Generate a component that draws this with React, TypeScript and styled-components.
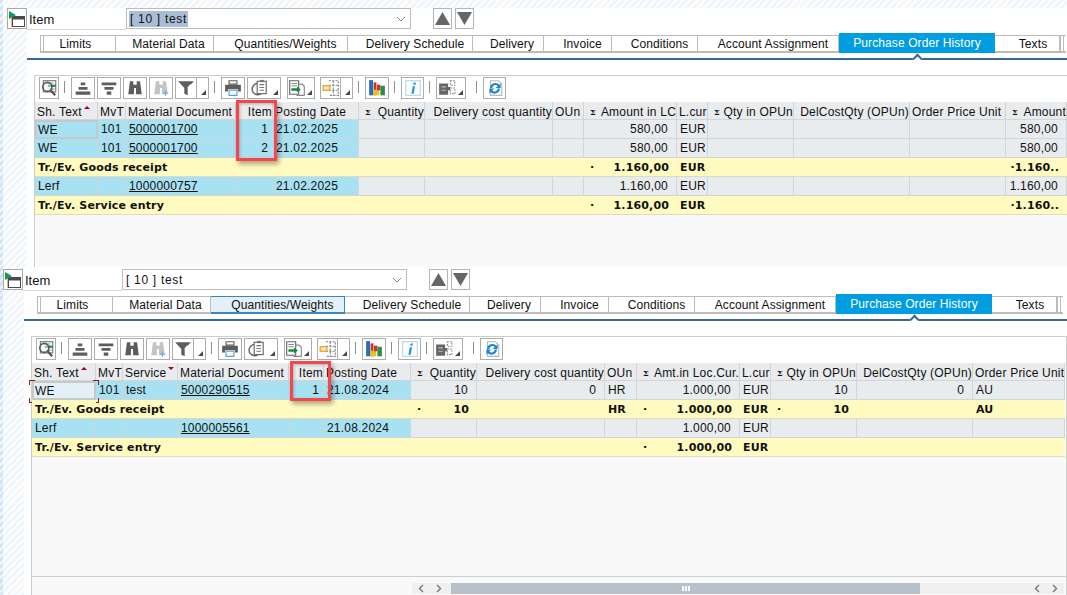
import React from "react";
import styled, { createGlobalStyle } from "styled-components";

const GlobalStyle = createGlobalStyle`
  html, body {
    margin: 0;
    padding: 0;
    background: #fff;
  }
  body {
    font-family: "Liberation Sans", Arial, sans-serif;
    font-size: 12px;
    color: #111;
  }
`;

const hatch =
  "repeating-linear-gradient(135deg, #eff4f9 0 2px, #fbfcfe 2px 5px)";
const strongHatch =
  "repeating-linear-gradient(135deg, #d3e5f3 0 3px, #f2f7fb 3px 5px)";

const Page = styled.div`
  width: 1067px;
  height: 595px;
  overflow: hidden;
  display: flex;
  flex-direction: column;
  background: ${strongHatch} 0 0 / 3px 100% no-repeat, ${hatch};
`;

const Pane = styled.section<{ $h: number; $top: number }>`
  height: ${(p) => p.$h}px;
  padding-top: ${(p) => p.$top}px;
  box-sizing: border-box;
  display: flex;
  flex-direction: column;
  flex-shrink: 0;
  min-width: 0;
`;

const HeadRow = styled.div<{ $left: number; $lead: number }>`
  display: flex;
  height: ${(p) => 22 + p.$lead}px;
  padding-left: ${(p) => p.$left}px;
  flex-shrink: 0;
`;

const HeadIcon = styled.button<{ $lead: number }>`
  width: 20px;
  height: 21px;
  margin-top: ${(p) => p.$lead}px;
  padding: 0;
  box-sizing: border-box;
  border: 1px solid #a9a9a9;
  background: #fff;
  display: flex;
  align-items: center;
  justify-content: center;
`;

const HeadFields = styled.div<{ $lead: number }>`
  flex: 1;
  padding-top: ${(p) => p.$lead}px;
  background: #fff;
  display: flex;
  align-items: flex-start;
`;

const ItemLabel = styled.label`
  width: 97px;
  height: 21px;
  padding-left: 2px;
  line-height: 23px;
  box-sizing: content-box;
  border-bottom: 1px solid #d4d4d4;
  font-size: 13px;
`;

const Combo = styled.div`
  width: 285px;
  height: 21px;
  box-sizing: border-box;
  border: 1px solid #bdbdbd;
  background: #fff;
  display: flex;
  align-items: center;
  justify-content: space-between;
  padding: 1px 4px 0 2px;
  letter-spacing: 0.7px;
`;

const ComboText = styled.span<{ $selected?: boolean }>`
  padding: 1px 1px;
  background: ${(p) => (p.$selected ? "#a9bdd6" : "transparent")};
`;

const Stepper = styled.div`
  display: flex;
  gap: 3px;
  margin-left: 22px;
`;

const StepButton = styled.button`
  width: 19px;
  height: 21px;
  padding: 0;
  box-sizing: border-box;
  border: 1px solid #b5b5b5;
  background: #fff;
  display: flex;
  align-items: center;
  justify-content: center;
`;

const Sheet = styled.div<{ $left: number }>`
  flex: 1;
  min-height: 0;
  margin-left: ${(p) => p.$left}px;
  padding-top: 3px;
  background: #fff;
  display: flex;
  flex-direction: column;
`;

const TabStrip = styled.div`
  display: flex;
  align-items: flex-start;
  height: 20px;
  margin-left: 13px;
  flex-shrink: 0;
`;

const TabStack = styled.div`
  width: 6px;
  height: 18px;
  margin-top: 2px;
  box-sizing: border-box;
  border-top: 1px solid #bcbcbc;
  border-bottom: 2px solid #bcbcbc;
  background: repeating-linear-gradient(90deg, #bcbcbc 0 1px, #fff 1px 3px);
  flex-shrink: 0;
`;

const Tab = styled.div<{
  $w: number;
  $shift: number;
  $state?: "active" | "hover";
}>`
  width: ${(p) => p.$w}px;
  box-sizing: border-box;
  flex-shrink: 0;
  text-align: center;
  letter-spacing: 0.1px;
  white-space: nowrap;
  padding-left: ${(p) => Math.max(p.$shift, 0) * 2}px;
  padding-right: ${(p) => Math.max(-p.$shift, 0) * 2}px;
  margin-top: ${(p) => (p.$state === "active" ? 0 : 2)}px;
  height: ${(p) => (p.$state === "active" ? 20 : 18)}px;
  line-height: ${(p) => (p.$state === "active" ? 21 : 16)}px;
  background: ${(p) =>
    p.$state === "active"
      ? "#009de0"
      : p.$state === "hover"
      ? "#e3f0f8"
      : "#fff"};
  color: ${(p) => (p.$state === "active" ? "#fff" : "#111")};
  border-style: solid;
  border-color: ${(p) => (p.$state === "hover" ? "#3c86bb" : "#bcbcbc")};
  border-width: ${(p) => (p.$state === "active" ? "0" : "1px 1px 2px 0")};
`;

const Rule = styled.div`
  position: relative;
  height: 2px;
  margin-top: 5px;
  background: #36699a;
  flex-shrink: 0;
`;

const RuleNotch = styled.span<{ $x: number }>`
  position: absolute;
  left: ${(p) => p.$x}px;
  top: -3px;
  width: 5px;
  height: 5px;
  background: #fff;
  border-top: 2px solid #36699a;
  border-left: 2px solid #36699a;
  transform: rotate(45deg);
`;

const Frame = styled.div<{ $closed?: boolean }>`
  flex: 1;
  min-height: 0;
  margin: 15px 0 0 7px;
  border-top: 1px solid #cdcdcd;
  border-left: 1px solid #cdcdcd;
  border-right: ${(p) => (p.$closed ? "1px solid #cdcdcd" : "0")};
  background: #f9f9f9;
  display: flex;
  flex-direction: column;
`;

const Toolbar = styled.div`
  height: 26px;
  box-sizing: border-box;
  padding: 1px 0 0 4px;
  background: #fff;
  display: flex;
  align-items: flex-start;
  gap: 2px;
  flex-shrink: 0;
`;

const ToolButton = styled.button<{ $w: number; $menu?: boolean; $space?: number }>`
  position: relative;
  width: ${(p) => p.$w}px;
  height: 22px;
  padding: 0 ${(p) => (p.$menu ? 8 : 0)}px 0 0;
  margin-left: ${(p) => p.$space ?? 0}px;
  box-sizing: border-box;
  border: 1px solid #adadad;
  background: #fff;
  display: flex;
  align-items: center;
  justify-content: center;
  flex-shrink: 0;
  &::after {
    content: "";
    display: ${(p) => (p.$menu ? "block" : "none")};
    position: absolute;
    right: 2px;
    bottom: 3px;
    width: 0;
    height: 0;
    border-left: 5px solid transparent;
    border-bottom: 5px solid #4a4a4a;
  }
`;

const SplitTail = styled(ToolButton)`
  margin-left: -2px;
  border-left: 0;
  padding: 0;
`;

const ToolSep = styled.span<{ $extra?: number }>`
  width: 1px;
  height: 12px;
  margin: 4px 4px 0 ${(p) => 3 + (p.$extra ?? 0)}px;
  background: #8f8f8f;
  flex-shrink: 0;
`;

const Table = styled.div`
  position: relative;
  flex-shrink: 0;
`;

const Row = styled.div<{ $cols: number[]; $h: number }>`
  display: grid;
  grid-template-columns: ${(p) => p.$cols.map((c) => `${c}px`).join(" ")};
  height: ${(p) => p.$h}px;
`;

const HeadCell = styled.div<{ $right?: boolean; $sum?: boolean }>`
  display: flex;
  align-items: center;
  justify-content: ${(p) =>
    p.$sum ? "space-between" : p.$right ? "flex-end" : "flex-start"};
  box-sizing: border-box;
  padding: 2px 0 0 ${(p) => (p.$sum ? 6 : 2)}px;
  background: #e9ebed;
  border-right: 1px solid #d2d4d6;
  border-bottom: 1px solid #d2d4d6;
  white-space: nowrap;
  overflow: hidden;
  letter-spacing: 0.2px;
`;

const SumMark = styled.span`
  font-size: 8px;
  font-weight: 700;
  font-family: "DejaVu Serif", serif;
`;

const SortMark = styled.span`
  width: 0;
  height: 0;
  margin: 0 0 9px 2px;
  border-left: 3px solid transparent;
  border-right: 3px solid transparent;
  border-bottom: 3px solid #a5002d;
`;

const SortDown = styled(SortMark)`
  border-bottom: 0;
  border-top: 3px solid #a5002d;
`;

const Cell = styled.div<{
  $tone: "blue" | "grey" | "total";
  $right?: boolean;
  $pad?: number;
  $framed?: boolean;
  $focus?: boolean;
}>`
  position: relative;
  display: flex;
  align-items: center;
  justify-content: ${(p) => (p.$right ? "flex-end" : "flex-start")};
  box-sizing: border-box;
  padding: ${(p) =>
    p.$right ? `0 ${p.$pad ?? 8}px 0 2px` : `0 1px 0 ${p.$framed ? 1 : 3}px`};
  white-space: nowrap;
  letter-spacing: 0.2px;
  background: ${(p) =>
    p.$focus
      ? "#e4f0f8"
      : p.$tone === "blue"
      ? "#a8e2f2"
      : p.$tone === "grey"
      ? "#e9ecee"
      : "#fffbc0"};
  border-right: ${(p) => (p.$tone === "total" ? "0" : "1px solid #cfd6da")};
  border-bottom: 1px solid ${(p) => (p.$tone === "total" ? "#dcdcc4" : "#cfd6da")};
  ${(p) => (p.$framed ? "border: 2px solid #c4c9cc;" : "")}
  overflow: ${(p) => (p.$tone === "total" || p.$focus ? "visible" : "hidden")};
  z-index: ${(p) => (p.$focus ? 1 : 0)};
  ${(p) =>
    p.$tone === "total"
      ? `font: 700 11px "DejaVu Sans", sans-serif; letter-spacing: 0.15px;
         &:first-child { z-index: 1; }`
      : ""}
`;

const TotalDot = styled.span`
  margin-right: auto;
  padding-left: 4px;
  font-weight: 700;
`;

const DocLink = styled.a`
  color: #111;
  text-decoration: underline;
`;

const FocusCorner = styled.span<{ $v: "top" | "bottom"; $h: "left" | "right" }>`
  position: absolute;
  ${(p) => p.$v}: ${(p) => (p.$v === "top" ? -3 : -5)}px;
  ${(p) => p.$h}: -5px;
  width: 5px;
  height: 4px;
  border-${(p) => p.$v}: 1px solid #8a1c1c;
  border-${(p) => p.$h}: 1px solid #8a1c1c;
`;

const Marker = styled.div<{ $l: number; $w: number; $h: number }>`
  position: absolute;
  left: ${(p) => p.$l}px;
  top: -2px;
  width: ${(p) => p.$w}px;
  height: ${(p) => p.$h}px;
  box-sizing: border-box;
  border: 3px solid #f4474d;
  box-shadow: 2px 3px 5px rgba(0, 0, 0, 0.35),
    inset 1px 1px 3px rgba(0, 0, 0, 0.25);
  pointer-events: none;
  z-index: 2;
`;

const ScrollBar = styled.div`
  margin-top: auto;
  height: 19px;
  box-sizing: border-box;
  border-top: 1px solid #cdcdcd;
  padding: 6px 2px 0 380px;
  display: flex;
  align-items: flex-start;
  flex-shrink: 0;
`;

const ScrollStep = styled.span`
  width: 18px;
  height: 11px;
  background: #f0f0f0;
  display: flex;
  align-items: center;
  justify-content: center;
  flex-shrink: 0;
`;

const ScrollTrack = styled.div`
  flex: 1;
  height: 11px;
  background: #f0f0f0;
  padding-left: 3px;
`;

const ScrollThumb = styled.div`
  width: 469px;
  height: 11px;
  background: #b6c1cc;
  display: flex;
  align-items: center;
  justify-content: center;
  gap: 1px;
`;

const Grip = styled.span`
  width: 2px;
  height: 5px;
  background: #fff;
`;

type Column = {
  label: string;
  w: number;
  right?: boolean;
  sum?: boolean;
  link?: boolean;
  pad?: number;
  sort?: "up" | "down";
  blue?: boolean;
};

type DataRow = {
  total?: boolean;
  values: string[];
  framed?: boolean;
  focus?: boolean;
};

const Line = (props: React.SVGProps<SVGSVGElement>) => (
  <svg width="18" height="18" viewBox="0 0 16 16" fill="none" {...props} />
);

const IconDetails = () => (
  <Line>
    <rect x="3" y="1.5" width="11" height="10" fill="#fff" stroke="#777" />
    <rect x="7" y="5" width="7" height="2" fill="#159447" />
    <path d="M6 3.5h6M8 9h5" stroke="#999" />
    <circle cx="6.5" cy="7" r="4" fill="#eef6ee" fillOpacity=".5" stroke="#555" strokeWidth="1.4" />
    <path d="M9.5 10l4 4.5" stroke="#555" strokeWidth="2" />
  </Line>
);
const IconSortUp = () => (
  <Line>
    <path d="M6 3h4v2.5H6zM4 7h8v2.5H4zM1.5 11h13v3h-13z" fill="#5d5d5d" />
  </Line>
);
const IconSortDown = () => (
  <Line>
    <path d="M1.5 3h13v2.5h-13zM4 7h8v2.5H4zM6 11h4v3H6z" fill="#5d5d5d" />
  </Line>
);
const IconBinoculars = ({ muted }: { muted?: boolean }) => (
  <Line>
    <path
      d="M3.5 2h3v3h3V2h3l1.5 11.5h-5L8.8 8H7.2l-.2 5.5H2z"
      fill={muted ? "#c4c4c4" : "#5d5d5d"}
    />
    {muted && <path d="M12 10v5M9.5 12.5h5" stroke="#6db3dd" />}
  </Line>
);
const IconFunnel = () => (
  <Line>
    <path d="M1 2h14L9.5 8v6.5l-3-1.5V8z" fill="#5d5d5d" />
    <path d="M9.5 8L12 5" stroke="#fff" />
  </Line>
);
const IconPrint = () => (
  <Line>
    <path d="M4.5 1.5h7v3h-7z" fill="#fff" stroke="#5d5d5d" />
    <path d="M1 5h14v6h-2.5V9h-9v2H1z" fill="#5d5d5d" />
    <path d="M4.5 10h7v4.5h-7z" fill="#fff" stroke="#5d9fd0" />
  </Line>
);
const IconExport = () => (
  <Line>
    <circle cx="6" cy="9" r="5" fill="#fff" stroke="#666" strokeWidth="1.3" />
    <rect x="5.5" y="2" width="8" height="11" fill="#fff" stroke="#666" />
    <path d="M7.5 5h4M7.5 7.5h4M7.5 10h4" stroke="#777" />
    <path d="M8 .8h3.5v2H8z" fill="#777" />
  </Line>
);
const IconTransfer = () => (
  <Line>
    <path d="M1.5 1.5h8v12h-8z" fill="#fff" stroke="#666" />
    <path d="M9.5 4.5h3l2 2v8h-7" stroke="#888" />
    <path d="M3 4h5M3 6h5" stroke="#888" />
    <path d="M3 8.2h5V6.7l3.4 2.6L8 12v-1.5H3z" fill="#128a3c" />
  </Line>
);
const IconLayout = () => (
  <Line>
    <path d="M6 1.5h8.5v13H6M10 1.5v13M6 5.5h8.5M6 10h8.5" stroke="#888" strokeDasharray="2 1" />
    <rect x="1" y="6" width="6" height="4" fill="#fde7b2" stroke="#e39c18" />
  </Line>
);
const IconChart = () => (
  <Line>
    <rect x="1" y="1" width="3.5" height="13.5" fill="#2a6db5" />
    <rect x="5" y="3" width="2.5" height="11.5" fill="#c8332c" />
    <rect x="5" y="9.5" width="5" height="5" fill="#e7c120" />
    <rect x="8" y="5" width="3" height="5" fill="#c8332c" />
    <rect x="11" y="6" width="4" height="8.5" fill="#2f8d46" />
  </Line>
);
const IconInfo = () => (
  <Line>
    <rect x="1.5" y="1.5" width="13" height="13" fill="#fff" stroke="#b7d6ec" />
    <path d="M8.6 3h2L10.2 5h-2zM7.8 6.5h2L8.6 13h-2z" fill="#1c97dc" />
  </Line>
);
const IconPuzzle = () => (
  <Line>
    <path d="M1 4h8v3h2v3H9v4H1z" fill="#666" />
    <path d="M11 1.5h4v4h-4zM11 8h4v5h-4z" fill="#fff" stroke="#888" strokeDasharray="1.5 1" />
    <path d="M3 7h4M3 10h4" stroke="#bbb" />
  </Line>
);
const IconRefresh = () => (
  <Line>
    <path d="M4 1.5h7l3 3v10H4z" fill="#fff" stroke="#b9b9b9" />
    <path d="M3.5 8a5 5 0 0 1 8.5-3l1-1.5V8H8.6L10.5 6.2A3 3 0 0 0 5.5 8z" fill="#1687cf" />
    <path d="M12.5 8.5a5 5 0 0 1-8.5 3l-1 1.5V8.5h4.4L5.5 10.3a3 3 0 0 0 5-1.8z" fill="#1687cf" />
  </Line>
);
const IconHead = () => (
  <svg width="18" height="18" viewBox="0 0 18 18" fill="none">
    <rect x="4.5" y="6.5" width="12" height="10" fill="#fff" stroke="#4a4a4a" />
    <path d="M4.5 7h12v2.5h-12z" fill="#4a4a4a" />
    <path d="M3.5 6v11" stroke="#f3b36b" />
    <path d="M1 1l7 4-7 4z" fill="#0d9a63" />
  </svg>
);
const IconStep = ({ up }: { up?: boolean }) => (
  <svg width="15" height="13" viewBox="0 0 15 13">
    <path d={up ? "M7.5 0L15 13H0z" : "M0 0h15L7.5 13z"} fill="#666" />
  </svg>
);
const Chevron = ({ left }: { left?: boolean }) => (
  <svg width="6" height="9" viewBox="0 0 6 9" fill="none">
    <path d={left ? "M5 1L1.5 4.5 5 8" : "M1 1l3.5 3.5L1 8"} stroke="#68788a" strokeWidth="1.4" />
  </svg>
);
const ComboArrow = () => (
  <svg width="10" height="6" viewBox="0 0 10 6" fill="none">
    <path d="M1 1l4 4 4-4" stroke="#8a8a8a" />
  </svg>
);

const Tools = () => (
  <Toolbar>
    <ToolButton $w={20}><IconDetails /></ToolButton>
    <ToolSep />
    <ToolButton $w={24}><IconSortUp /></ToolButton>
    <ToolButton $w={24}><IconSortDown /></ToolButton>
    <ToolButton $w={24}><IconBinoculars /></ToolButton>
    <ToolButton $w={24}><IconBinoculars muted /></ToolButton>
    <ToolButton $w={22}><IconFunnel /></ToolButton>
    <SplitTail $w={12} $menu />
    <ToolSep />
    <ToolButton $w={24}><IconPrint /></ToolButton>
    <ToolButton $w={34} $menu><IconExport /></ToolButton>
    <ToolButton $w={28} $menu $space={4}><IconTransfer /></ToolButton>
    <ToolButton $w={21} $space={3}><IconLayout /></ToolButton>
    <SplitTail $w={12} $menu />
    <ToolSep />
    <ToolButton $w={24}><IconChart /></ToolButton>
    <ToolSep />
    <ToolButton $w={23}><IconInfo /></ToolButton>
    <ToolSep />
    <ToolButton $w={30} $menu><IconPuzzle /></ToolButton>
    <ToolSep $extra={5} />
    <ToolButton $w={23}><IconRefresh /></ToolButton>
  </Toolbar>
);

const DataTable = ({
  columns,
  rows,
  marker,
}: {
  columns: Column[];
  rows: DataRow[];
  marker: { l: number; w: number; h: number };
}) => {
  const cols = columns.map((c) => c.w);
  return (
    <Table>
      <Row $cols={cols} $h={18}>
        {columns.map((c, i) => (
          <HeadCell key={i} $right={c.right} $sum={c.sum}>
            {c.sum && <SumMark>Σ</SumMark>}
            <span>{c.label}</span>
            {c.sort === "up" && <SortMark />}
            {c.sort === "down" && <SortDown />}
          </HeadCell>
        ))}
      </Row>
      {rows.map((r, ri) => (
        <Row key={ri} $cols={cols} $h={19}>
          {columns.map((c, i) => {
            const raw = r.values[i] ?? "";
            const dot = raw.startsWith("·");
            const text = dot ? raw.slice(1) : raw;
            const focus = i === 0 && r.focus;
            return (
              <Cell
                key={i}
                $tone={r.total ? "total" : c.blue ? "blue" : "grey"}
                $right={c.right}
                $pad={c.pad}
                $framed={i === 0 && r.framed}
                $focus={focus}
              >
                {dot && <TotalDot>·</TotalDot>}
                {c.link && text ? <DocLink>{text}</DocLink> : text}
                {focus && (
                  <>
                    <FocusCorner $v="top" $h="left" />
                    <FocusCorner $v="top" $h="right" />
                    <FocusCorner $v="bottom" $h="left" />
                    <FocusCorner $v="bottom" $h="right" />
                  </>
                )}
              </Cell>
            );
          })}
        </Row>
      ))}
      <Marker $l={marker.l} $w={marker.w} $h={marker.h} />
    </Table>
  );
};

const tabs = [
  ["Limits", 70, -5],
  ["Material Data", 98, 4],
  ["Quantities/Weights", 134, 5],
  ["Delivery Schedule", 125, 5],
  ["Delivery", 71, 4],
  ["Invoice", 68, 5],
  ["Conditions", 86, 5],
  ["Account Assignment", 141, 5],
  ["Purchase Order History", 156, 0],
  ["Texts", 65, 6],
] as const;

const upperColumns: Column[] = [
  { label: "Sh. Text", w: 63, blue: true, sort: "up" },
  { label: "MvT", w: 28, blue: true },
  { label: "Material Document", w: 110, blue: true, link: true },
  { label: "Item", w: 37, blue: true, right: true, pad: 4 },
  { label: "Posting Date", w: 86, blue: true },
  { label: "Quantity", w: 66, sum: true, right: true },
  { label: "Delivery cost quantity", w: 128, right: true },
  { label: "OUn", w: 31 },
  { label: "Amount in LC", w: 93, sum: true, right: true },
  { label: "L.cur", w: 31 },
  { label: "Qty in OPUn", w: 86, sum: true, right: true },
  { label: "DelCostQty (OPUn)", w: 116, right: true },
  { label: "Order Price Unit", w: 96 },
  { label: "Amount", w: 61, sum: true, right: true },
];

const upperRows: DataRow[] = [
  { framed: true, values: ["WE", "101", "5000001700", "1", "21.02.2025", "", "", "", "580,00", "EUR", "", "", "", "580,00"] },
  { values: ["WE", "101", "5000001700", "2", "21.02.2025", "", "", "", "580,00", "EUR", "", "", "", "580,00"] },
  { total: true, values: ["Tr./Ev. Goods receipt", "", "", "", "", "", "", "", "·1.160,00", "EUR", "", "", "", "·1.160.."] },
  { values: ["Lerf", "", "1000000757", "", "21.02.2025", "", "", "", "1.160,00", "EUR", "", "", "", "1.160,00"] },
  { total: true, values: ["Tr./Ev. Service entry", "", "", "", "", "", "", "", "·1.160,00", "EUR", "", "", "", "·1.160.."] },
];

const lowerColumns: Column[] = [
  { label: "Sh. Text", w: 64, blue: true, sort: "up" },
  { label: "MvT", w: 27, blue: true },
  { label: "Service", w: 55, blue: true, sort: "down" },
  { label: "Material Document", w: 111, blue: true, link: true },
  { label: "Item", w: 35, blue: true, right: true, pad: 4 },
  { label: "Posting Date", w: 87, blue: true },
  { label: "Quantity", w: 66, sum: true, right: true },
  { label: "Delivery cost quantity", w: 128, right: true },
  { label: "OUn", w: 32 },
  { label: "Amt.in Loc.Cur.", w: 103, sum: true, right: true },
  { label: "L.cur", w: 31 },
  { label: "Qty in OPUn", w: 86, sum: true, right: true },
  { label: "DelCostQty (OPUn)", w: 116, right: true },
  { label: "Order Price Unit", w: 92 },
];

const lowerRows: DataRow[] = [
  { framed: true, focus: true, values: ["WE", "101", "test", "5000290515", "1", "21.08.2024", "10", "0", "HR", "1.000,00", "EUR", "10", "0", "AU"] },
  { total: true, values: ["Tr./Ev. Goods receipt", "", "", "", "", "", "·10", "", "HR", "·1.000,00", "EUR", "·10", "", "AU"] },
  { values: ["Lerf", "", "", "1000005561", "", "21.08.2024", "", "", "", "1.000,00", "EUR", "", "", ""] },
  { total: true, values: ["Tr./Ev. Service entry", "", "", "", "", "", "", "", "", "·1.000,00", "EUR", "", "", ""] },
];

const PaneContent = ({
  iconLeft,
  sheetLeft,
  lead,
  hoverTab,
  selected,
  children,
}: {
  iconLeft: number;
  sheetLeft: number;
  lead: number;
  hoverTab?: string;
  selected?: boolean;
  children: React.ReactNode;
}) => (
  <>
    <HeadRow $left={iconLeft} $lead={lead}>
      <HeadIcon $lead={lead}>
        <IconHead />
      </HeadIcon>
      <HeadFields $lead={lead}>
        <ItemLabel>Item</ItemLabel>
        <Combo>
          <ComboText $selected={selected}>[ 10 ] test</ComboText>
          <ComboArrow />
        </Combo>
        <Stepper>
          <StepButton><IconStep up /></StepButton>
          <StepButton><IconStep /></StepButton>
        </Stepper>
      </HeadFields>
    </HeadRow>
    <Sheet $left={sheetLeft}>
      <TabStrip>
        <TabStack />
        {tabs.map(([label, w, shift]) => (
          <Tab
            key={label}
            $w={w}
            $shift={shift}
            $state={
              label === "Purchase Order History"
                ? "active"
                : label === hoverTab
                ? "hover"
                : undefined
            }
          >
            {label}
          </Tab>
        ))}
        <TabStack />
      </TabStrip>
      <Rule>
        <RuleNotch $x={887} />
      </Rule>
      {children}
    </Sheet>
  </>
);

export default function App() {
  return (
    <Page>
      <GlobalStyle />
      <Pane $h={267} $top={8}>
        <PaneContent iconLeft={7} sheetLeft={27} lead={0} selected>
          <Frame>
            <Tools />
            <DataTable
              columns={upperColumns}
              rows={upperRows}
              marker={{ l: 201, w: 41, h: 61 }}
            />
          </Frame>
        </PaneContent>
      </Pane>
      <Pane $h={328} $top={0}>
        <PaneContent iconLeft={3} sheetLeft={24} lead={2} hoverTab="Quantities/Weights">
          <Frame $closed>
            <Tools />
            <DataTable
              columns={lowerColumns}
              rows={lowerRows}
              marker={{ l: 258, w: 41, h: 40 }}
            />
            <ScrollBar>
              <ScrollStep><Chevron left /></ScrollStep>
              <ScrollStep><Chevron /></ScrollStep>
              <ScrollTrack>
                <ScrollThumb>
                  <Grip />
                  <Grip />
                  <Grip />
                </ScrollThumb>
              </ScrollTrack>
              <ScrollStep><Chevron left /></ScrollStep>
              <ScrollStep><Chevron /></ScrollStep>
            </ScrollBar>
          </Frame>
        </PaneContent>
      </Pane>
    </Page>
  );
}
